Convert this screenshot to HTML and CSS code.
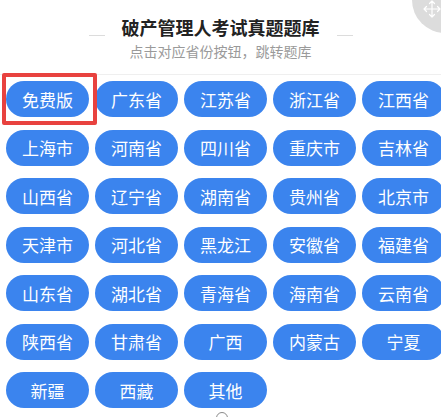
FILE: index.html
```html
<!DOCTYPE html>
<html lang="zh">
<head>
<meta charset="utf-8">
<link rel="stylesheet" href="styles.css">
</head>
<body>
<div class="page">
  <div class="fab">
    <svg width="18" height="18" viewBox="0 0 18 18" fill="none" stroke="#fff" stroke-width="1.2" stroke-linecap="round" stroke-linejoin="round">
      <path d="M9 1v16M1 9h16M6.5 3.5L9 1l2.5 2.5M6.5 14.5L9 17l2.5-2.5M3.5 6.5L1 9l2.5 2.5M14.5 6.5L17 9l-2.5 2.5"/>
    </svg>
  </div>
  <header class="head">
    <div class="title-row">
      <span class="dash"></span>
      <h1 class="title">破产管理人考试真题题库</h1>
      <span class="dash"></span>
    </div>
    <p class="sub">点击对应省份按钮，跳转题库</p>
  </header>
  <main class="grid">
    <a class="btn">免费版</a>
    <a class="btn">广东省</a>
    <a class="btn">江苏省</a>
    <a class="btn">浙江省</a>
    <a class="btn">江西省</a>
    <a class="btn">上海市</a>
    <a class="btn">河南省</a>
    <a class="btn">四川省</a>
    <a class="btn">重庆市</a>
    <a class="btn">吉林省</a>
    <a class="btn">山西省</a>
    <a class="btn">辽宁省</a>
    <a class="btn">湖南省</a>
    <a class="btn">贵州省</a>
    <a class="btn">北京市</a>
    <a class="btn">天津市</a>
    <a class="btn">河北省</a>
    <a class="btn">黑龙江</a>
    <a class="btn">安徽省</a>
    <a class="btn">福建省</a>
    <a class="btn">山东省</a>
    <a class="btn">湖北省</a>
    <a class="btn">青海省</a>
    <a class="btn">海南省</a>
    <a class="btn">云南省</a>
    <a class="btn">陕西省</a>
    <a class="btn">甘肃省</a>
    <a class="btn">广西</a>
    <a class="btn">内蒙古</a>
    <a class="btn">宁夏</a>
    <a class="btn">新疆</a>
    <a class="btn">西藏</a>
    <a class="btn">其他</a>
  </main>
  <div class="highlight"></div>
  <div class="bottom-dot"></div>
</div>
</body>
</html>
```
FILE: styles.css
```css
html, body {
  margin: 0;
  padding: 0;
  background: #fff;
  overflow: hidden;
}
.page {
  position: relative;
  width: 441px;
  height: 417px;
  overflow: hidden;
  font-family: "Noto Sans CJK SC", "Noto Sans", sans-serif;
}
.head {
  height: 75px;
  border-bottom: 1px solid #efefef;
  box-sizing: border-box;
  padding-top: 15px;
  text-align: center;
}
.title-row {
  display: flex;
  justify-content: center;
  align-items: center;
  gap: 17px;
  height: 24px;
}
.dash {
  width: 16px;
  height: 1px;
  background: #dcdcdc;
  margin-top: 16px;
}
.title {
  margin: 0;
  font-size: 18px;
  line-height: 24px;
  font-weight: 700;
  color: #222;
}
.sub {
  margin: 2px 0 0;
  font-size: 14px;
  line-height: 20px;
  color: #9a9a9a;
}
.grid {
  display: grid;
  grid-template-columns: repeat(5, 83px);
  grid-auto-rows: 36px;
  column-gap: 6px;
  row-gap: 12.5px;
  padding: 6px 0 0 6px;
  width: 460px;
}
.btn {
  display: flex;
  align-items: center;
  justify-content: center;
  background: #3b84ee;
  color: #fff;
  border-radius: 18px;
  font-size: 17px;
  line-height: 1;
  text-decoration: none;
}
.highlight {
  position: absolute;
  left: 2px;
  top: 73px;
  width: 95px;
  height: 52px;
  box-sizing: border-box;
  border: 4px solid #e8423f;
  border-radius: 2px;
}
.fab {
  position: absolute;
  left: 412px;
  top: -33px;
  width: 66px;
  height: 66px;
  border-radius: 50%;
  background: #dcdcdc;
}
.fab svg {
  position: absolute;
  left: 11px;
  top: 33px;
}
.bottom-dot {
  position: absolute;
  left: 216px;
  top: 412px;
  width: 10px;
  height: 10px;
  border: 1.5px solid #8a8a8a;
  border-radius: 50%;
}
```
